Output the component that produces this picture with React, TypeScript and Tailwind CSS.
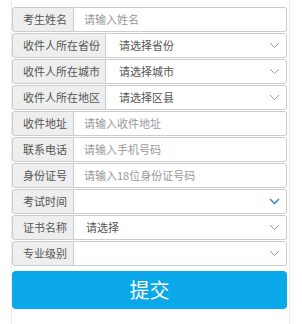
import React from "react";

type Row = {
  label: string;
  wide?: boolean;
  kind: "input" | "select" | "date";
  placeholder?: string;
  value?: string;
};

const rows: Row[] = [
  { label: "考生姓名", kind: "input", placeholder: "请输入姓名" },
  { label: "收件人所在省份", wide: true, kind: "select", value: "请选择省份" },
  { label: "收件人所在城市", wide: true, kind: "select", value: "请选择城市" },
  { label: "收件人所在地区", wide: true, kind: "select", value: "请选择区县" },
  { label: "收件地址", kind: "input", placeholder: "请输入收件地址" },
  { label: "联系电话", kind: "input", placeholder: "请输入手机号码" },
  { label: "身份证号", kind: "input", placeholder: "请输入18位身份证号码" },
  { label: "考试时间", kind: "date" },
  { label: "证书名称", kind: "select", value: "请选择" },
  { label: "专业级别", kind: "select", value: "" },
];

const Chevron = ({ blue }: { blue?: boolean }) => (
  <svg
    width="11"
    height="7"
    viewBox="0 0 11 7"
    className="shrink-0"
    fill="none"
    stroke={blue ? "#3b8fd6" : "#a0a0a0"}
    strokeWidth={blue ? 1.6 : 1}
  >
    <path d="M1 1l4.5 4.5L10 1" />
  </svg>
);

const FormRow = ({ row }: { row: Row }) => {
  return (
    <div className="flex h-[25px]">
      <div
        className={`${row.wide ? "w-[94px]" : "w-[62px]"} shrink-0 flex items-center pl-[10px] bg-[#eeeeee] border border-[#cccccc] rounded-l-[3px] text-[#555] whitespace-nowrap`}
      >
        {row.label}
      </div>
      <div className="flex-1 flex items-center border border-l-0 border-[#cccccc] rounded-r-[3px] bg-white pr-[6px]">
        {row.kind === "input" && (
          <span className="pl-[10px] text-[#999]">{row.placeholder}</span>
        )}
        {row.kind === "select" && (
          <>
            <span className={`${row.wide ? "pl-[13px]" : "pl-[12px]"} flex-1 text-[#555]`}>
              {row.value}
            </span>
            <Chevron />
          </>
        )}
        {row.kind === "date" && (
          <>
            <span className="flex-1" />
            <Chevron blue />
          </>
        )}
      </div>
    </div>
  );
};

const App = () => {
  return (
    <div
      className="w-[302px] h-[324px] bg-white overflow-hidden text-[11px]"
      style={{ fontFamily: '"Noto Sans CJK SC", "Noto Sans", sans-serif' }}
    >
      <div className="ml-[11px] w-[279px] h-full border-x border-[#ececec] pt-[7px] pr-[2px]">
        <div className="flex flex-col gap-[1px]">
          {rows.map((r) => (
            <FormRow key={r.label} row={r} />
          ))}
        </div>
        <button className="mt-[5px] w-full h-[38px] rounded-[4px] bg-[#0aa8e8] text-white text-[20px]">
          提交
        </button>
      </div>
    </div>
  );
};

export default App;
